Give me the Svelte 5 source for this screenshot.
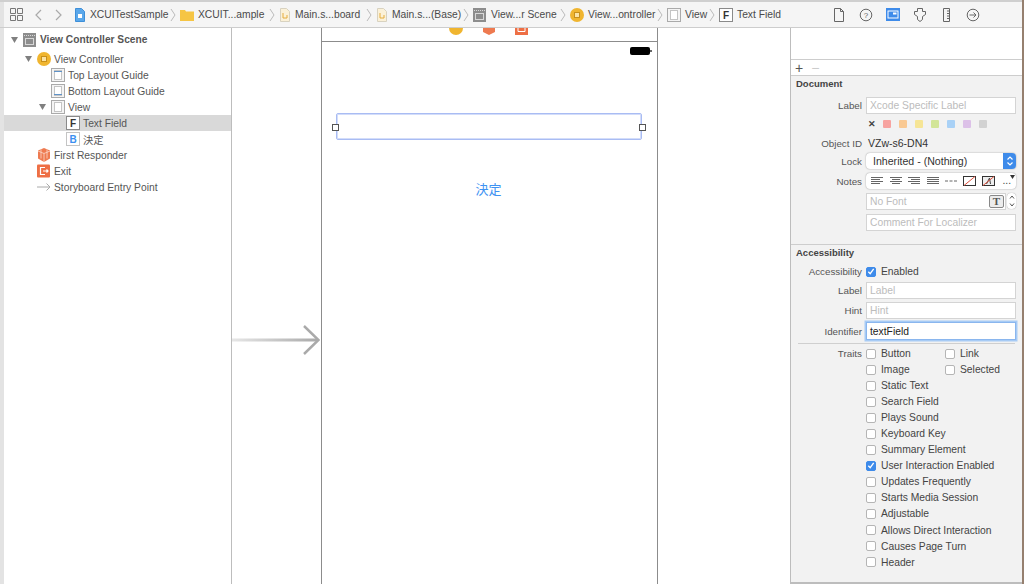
<script lang="ts">
  const crumbs = [
    { icon: "file", text: "XCUITestSample", w: 106 },
    { icon: "folder", text: "XCUIT...ample", w: 99 },
    { icon: "story", text: "Main.s...board", w: 97 },
    { icon: "story", text: "Main.s...(Base)", w: 97 },
    { icon: "scene", text: "View...r Scene", w: 97 },
    { icon: "vc", text: "View...ontroller", w: 97 },
    { icon: "view", text: "View", w: 52 },
    { icon: "F", text: "Text Field", w: 70 }
  ];

  const tree = [
    { depth: 0, arrow: true, icon: "scene", text: "View Controller Scene", bold: true },
    { depth: 1, arrow: true, icon: "vc", text: "View Controller" },
    { depth: 2, icon: "top", text: "Top Layout Guide" },
    { depth: 2, icon: "bottom", text: "Bottom Layout Guide" },
    { depth: 2, arrow: true, icon: "view", text: "View" },
    { depth: 3, icon: "F", text: "Text Field", selected: true },
    { depth: 3, icon: "B", text: "決定" },
    { depth: 1, icon: "cube", text: "First Responder" },
    { depth: 1, icon: "exit", text: "Exit" },
    { depth: 1, icon: "entry", text: "Storyboard Entry Point" }
  ];

  const swatches = ["#f7a3a0", "#f9c993", "#f6e596", "#d2e598", "#a9d1f6", "#dcc1e8", "#d2d2d2"];

  const alignments = [
    "M1 1.5h12M1 3.5h9M1 5.5h12M1 7.5h9",
    "M1 1.5h12M3 3.5h8M1 5.5h12M3 7.5h8",
    "M1 1.5h12M4 3.5h9M1 5.5h12M4 7.5h9",
    "M1 1.5h12M1 3.5h12M1 5.5h12M1 7.5h12",
    "M1 5h3M5.5 5h3M10 5h3"
  ];

  const traits = [
    ["Button", "Link"],
    ["Image", "Selected"],
    ["Static Text"],
    ["Search Field"],
    ["Plays Sound"],
    ["Keyboard Key"],
    ["Summary Element"],
    ["User Interaction Enabled"],
    ["Updates Frequently"],
    ["Starts Media Session"],
    ["Adjustable"],
    ["Allows Direct Interaction"],
    ["Causes Page Turn"],
    ["Header"]
  ];
</script>

{#snippet icon(kind: string)}
  <svg class="ico" width={kind === "file" || kind === "story" ? 12 : 14} height="14" viewBox="0 0 {kind === 'file' || kind === 'story' ? 12 : 14} 14">
    {#if kind === "file"}
      <path d="M1.500.5h6l3 3v10h-9z" fill="#5aa7ea" stroke="#3d8fd9" />
      <rect x="4" y="6" width="4" height="4" fill="#fff" />
    {:else if kind === "folder"}
      <path d="M0 2h5l1 1.500h8V13H0z" fill="#f6c544" />
    {:else if kind === "story"}
      <path d="M1.500.5h6l3 3v10h-9z" fill="#fbf1d8" stroke="#d8d2c0" />
      <path d="M4 5v5h4V7" fill="none" stroke="#e5ac3c" />
    {:else if kind === "scene"}
      <rect x="0" y="0" width="13" height="14" fill="#8d8d8d" />
      <rect x="2.500" y="5.500" width="8" height="6" fill="none" stroke="#d8d8d8" />
      <path d="M1 2.500h11" stroke="#d8d8d8" stroke-dasharray="1 1" />
    {:else if kind === "vc"}
      <circle cx="7" cy="7" r="7" fill="#f0b52f" />
      <rect x="4.500" y="4.500" width="5" height="5" fill="#fbe3a4" stroke="#c8901a" />
    {:else if kind === "top" || kind === "bottom" || kind === "view"}
      <rect x=".5" y=".5" width="13" height="13" fill="#f4f4f4" stroke="#aaa" />
      <rect x="3.500" y="2.500" width="7" height="9" fill="#fff" stroke="#c4c4c4" />
      {#if kind === "top"}<path d="M3 3.500h8" stroke="#5f93c9" />{/if}
      {#if kind === "bottom"}<path d="M3 10.500h8" stroke="#5f93c9" />{/if}
    {:else if kind === "F" || kind === "B"}
      <rect x=".5" y=".5" width="13" height="13" fill="#fff" stroke={kind === "F" ? "#8a8a8a" : "#c4c4c4"} />
      <text x="7" y="10.500" text-anchor="middle" font-size="10" font-weight="700" font-family="Liberation Sans, sans-serif" fill={kind === "F" ? "#333" : "#3b8ff0"}>{kind}</text>
    {:else if kind === "cube"}
      <path d="M7 0l6 2.500v8L7 14l-6-3.500v-8z" fill="#ee7a50" />
      <path d="M1 3l6 2.500L13 3M7 5.500V14M4 1.500v9M10 1.500v9" fill="none" stroke="#fbd9cc" stroke-width=".8" />
    {:else if kind === "exit"}
      <rect width="13" height="13" y=".5" rx="1" fill="#ee6f45" />
      <path d="M8 3.500H3.500v7H8M6 7h5M9.500 5.500L11 7 9.500 8.500" fill="none" stroke="#fff" stroke-width="1.200" />
    {:else if kind === "entry"}
      <path d="M0 7h13M9.500 3.500L13 7l-3.500 3.500" fill="none" stroke="#aaa" />
    {/if}
  </svg>
{/snippet}

{#snippet checkbox(on: boolean)}
  <span class="check" class:on>
    {#if on}
      <svg width="9" height="9" viewBox="0 0 9 9"><path d="M1.500 4.800L3.600 7 7.500 1.500" fill="none" stroke="#fff" stroke-width="1.500" /></svg>
    {/if}
  </span>
{/snippet}

<div class="window">
  <header class="toolbar">
    <div class="jump">
      <svg class="grid" width="13" height="13" viewBox="0 0 13 13">
        <path d="M.5.500h5v5h-5zM7.500.500h5v5h-5zM.5 7.500h5v5h-5zM7.500 7.500h5v5h-5z" fill="none" stroke="#777" />
      </svg>
      <svg class="nav" width="9" height="12" viewBox="0 0 9 12"><path d="M7 1L2 6l5 5" fill="none" stroke="#aaa" stroke-width="1.200" /></svg>
      <svg class="nav" width="9" height="12" viewBox="0 0 9 12"><path d="M2 1l5 5-5 5" fill="none" stroke="#aaa" stroke-width="1.200" /></svg>
      <div class="crumbs">
        {#each crumbs as c, i}
          <div class="crumb" style:width="{c.w}px">
            {@render icon(c.icon)}
            <span>{c.text}</span>
            {#if i < crumbs.length - 1}
              <svg class="sep" width="6" height="14" viewBox="0 0 6 14"><path d="M1 1l4 6-4 6" fill="none" stroke="#bbb" /></svg>
            {/if}
          </div>
        {/each}
      </div>
    </div>
    <div class="tabs">
      <span><svg width="12" height="14" viewBox="0 0 12 14"><path d="M1.500.5h6l3 3v10h-9zM7.500.5v3h3" fill="none" stroke="#666" /></svg></span>
      <span><svg width="14" height="14" viewBox="0 0 14 14"><circle cx="7" cy="7" r="5.800" fill="none" stroke="#666" /><text x="7" y="10" text-anchor="middle" font-size="8" font-family="Liberation Sans, sans-serif" fill="#666">?</text></svg></span>
      <span><svg width="14" height="13" viewBox="0 0 14 13"><rect width="14" height="13" fill="#3e8bea" /><rect x="2" y="3" width="10" height="7" fill="none" stroke="#fff" /><rect x="7" y="4.500" width="3.500" height="2" fill="#fff" /></svg></span>
      <span><svg width="12" height="14" viewBox="0 0 12 14"><path d="M3.500.5h5v3h3v3l-3 2v3l-2.500 2-2.500-2v-3l-3-2v-3h3z" fill="none" stroke="#666" /></svg></span>
      <span><svg width="7" height="14" viewBox="0 0 7 14"><path d="M.5.500h6v13h-6zM4 3h2.500M4 5.500h2.500M4 8h2.500M4 10.500h2.500" fill="none" stroke="#666" /></svg></span>
      <span><svg width="14" height="14" viewBox="0 0 14 14"><circle cx="7" cy="7" r="5.800" fill="none" stroke="#666" /><path d="M3.500 7h6.500M7.500 4.500L10 7 7.500 9.500" fill="none" stroke="#666" /></svg></span>
    </div>
  </header>

  <div class="body">
    <nav class="outline">
      {#each tree as row}
        <div class="row d{row.depth}" class:selected={row.selected}>
          <span class="arrow">{#if row.arrow}<svg width="7" height="6" viewBox="0 0 7 6"><path d="M0 0h7L3.500 6z" fill="#808080" /></svg>{/if}</span>
          {@render icon(row.icon)}
          <span class:bold={row.bold}>{row.text}</span>
        </div>
      {/each}
    </nav>

    <main class="canvas">
      <div class="entry">
        <svg width="88" height="32" viewBox="0 0 88 32">
          <defs>
            <linearGradient id="fade"><stop offset="0" stop-color="#e6e6e6" /><stop offset="1" stop-color="#aaa" /></linearGradient>
          </defs>
          <rect x="0" y="14.500" width="85" height="3" fill="url(#fade)" />
          <path d="M72 2l14.500 14L72 30" fill="none" stroke="#aaa" stroke-width="2.500" />
        </svg>
      </div>
      <div class="scene">
        <div class="dock">
          <svg width="14" height="7" viewBox="0 0 14 7"><path d="M0 0h14a7 7 0 0 1-14 0" fill="#f0b52f" /></svg>
          <svg width="14" height="7" viewBox="0 0 14 7"><path d="M1 0h12v4L7 7 1 4z" fill="#ee7a50" /></svg>
          <svg width="13" height="7" viewBox="0 0 13 7"><path d="M0 0h13v7H0z" fill="#ee6f45" /><path d="M3 0v3.500h7V0" fill="none" stroke="#fff" /></svg>
        </div>
        <div class="screen">
          <div class="status"><span class="battery"></span></div>
          <div class="field">
            <span class="handle left"></span>
            <span class="handle right"></span>
          </div>
          <div class="decide">決定</div>
        </div>
      </div>
    </main>

    <aside class="inspector">
      <div class="blank"></div>
      <div class="addbar"><span class="plus">+</span><span class="minus">−</span></div>

      <section class="doc">
        <h4>Document</h4>
        <div class="line"><span class="lab">Label</span><div class="input ph">Xcode Specific Label</div></div>
        <div class="swatches">
          <span class="x">✕</span>
          {#each swatches as s}<span class="swatch" style:background={s}></span>{/each}
        </div>
        <div class="line"><span class="lab">Object ID</span><div class="value">VZw-s6-DN4</div></div>
        <div class="line"><span class="lab">Lock</span>
          <div class="select">Inherited - (Nothing)
            <span class="stepper"><svg width="8" height="12" viewBox="0 0 8 12"><path d="M1.500 4.500L4 2l2.500 2.500M1.500 7.500L4 10l2.500-2.500" fill="none" stroke="#fff" stroke-width="1.200" /></svg></span>
          </div>
        </div>
        <div class="line"><span class="lab">Notes</span>
          <div class="notes">
            {#each alignments as d}
              <span class="seg"><svg width="14" height="10" viewBox="0 0 14 10"><path {d} fill="none" stroke="#666" /></svg></span>
            {/each}
            <span class="seg"><svg width="13" height="10" viewBox="0 0 13 10"><rect x=".5" y=".5" width="12" height="9" fill="none" stroke="#333" /><path d="M1 9.500L12 .5" stroke="#e0503c" /></svg></span>
            <span class="seg"><svg width="13" height="10" viewBox="0 0 13 10"><rect x=".5" y=".5" width="12" height="9" fill="#eee" stroke="#333" /><path d="M4.500 8l3-6 1 6" fill="none" stroke="#444" /><path d="M1 9.500L12 .5" stroke="#e0503c" /></svg></span>
            <span class="seg more">...<svg class="caret" width="5" height="4" viewBox="0 0 5 4"><path d="M0 0h5L2.500 4z" fill="#333" /></svg></span>
          </div>
        </div>
        <div class="line">
          <span class="lab"></span>
          <div class="input ph font">No Font
            <span class="t">T</span>
          </div>
          <span class="mini"><svg width="6" height="14" viewBox="0 0 6 14"><path d="M1 4.500L3 2l2 2.500M1 9.500L3 12l2-2.500" fill="none" stroke="#555" /></svg></span>
        </div>
        <div class="line"><span class="lab"></span><div class="input ph">Comment For Localizer</div></div>
      </section>

      <section class="a11y">
        <h4>Accessibility</h4>
        <div class="line"><span class="lab">Accessibility</span><div class="checkrow">{@render checkbox(true)}<span>Enabled</span></div></div>
        <div class="line"><span class="lab">Label</span><div class="input ph">Label</div></div>
        <div class="line"><span class="lab">Hint</span><div class="input ph">Hint</div></div>
        <div class="line"><span class="lab">Identifier</span><div class="input focused">textField</div></div>
      </section>
      <hr />
      <div class="traits">
        {#each traits as pair, i}
          <div class="line trait">
            <span class="lab">{i === 0 ? "Traits" : ""}</span>
            <div class="checkrow first">{@render checkbox(pair[0] === "User Interaction Enabled")}<span>{pair[0]}</span></div>
            {#if pair[1]}
              <div class="checkrow">{@render checkbox(false)}<span>{pair[1]}</span></div>
            {/if}
          </div>
        {/each}
      </div>
    </aside>
  </div>
</div>

<style>
  :global(body) {
    margin: 0;
    background: #fff;
  }

  .window {
    width: 1024px;
    height: 584px;
    box-sizing: border-box;
    overflow: hidden;
    display: flex;
    flex-direction: column;
    border-right: 2px solid #96806f;
    font-family: "Liberation Sans", "Noto Sans CJK JP", sans-serif;
    font-size: 10.3px;
    color: #4a4a4a;
  }

  .toolbar {
    height: 28px;
    box-sizing: border-box;
    flex: none;
    display: flex;
    background: #f5f5f5;
    border-top: 2px solid #cfcfcf;
    border-bottom: 1px solid #cdcdcd;
  }

  .jump {
    width: 790px;
    flex: none;
    display: flex;
    align-items: center;
    box-sizing: border-box;
    padding-left: 6px;
    border-left: 4px solid #e3e3e3;
  }

  .grid {
    margin-right: 11px;
  }

  .nav {
    margin-right: 11px;
  }

  .crumbs {
    display: flex;
  }

  .crumb {
    display: flex;
    align-items: center;
    gap: 4px;
    flex: none;
    white-space: nowrap;
    position: relative;
  }

  .sep {
    position: absolute;
    right: 4px;
  }

  .tabs {
    flex: 1;
    display: flex;
    align-items: center;
    padding-left: 36px;
  }

  .tabs span {
    width: 26.8px;
    display: flex;
    justify-content: center;
  }

  .body {
    flex: 1;
    display: flex;
    min-height: 0;
  }

  .outline {
    width: 232px;
    flex: none;
    box-sizing: border-box;
    padding-top: 3px;
    border-left: 4px solid #e3e3e3;
    border-right: 1px solid #bdbdbd;
    background: #fff;
  }

  .row {
    height: 16px;
    display: flex;
    align-items: center;
    gap: 3px;
    white-space: nowrap;
    color: #555;
  }

  .row.selected {
    background: #d9d9d9;
  }

  .row .ico {
    flex: none;
  }

  .d0 { padding-left: 6px; height: 17px; margin-bottom: 3px; }
  .d1 { padding-left: 20px; }
  .d2 { padding-left: 34px; }
  .d3 { padding-left: 49px; }

  .arrow {
    width: 9px;
    flex: none;
    display: flex;
    padding-left: 1px;
  }

  .bold {
    font-weight: 700;
    font-size: 10.2px;
  }

  .canvas {
    width: 558px;
    flex: none;
    display: flex;
    background: #fff;
  }

  .entry {
    width: 89px;
    flex: none;
    align-self: flex-start;
    margin-top: 296px;
  }

  .scene {
    width: 337px;
    flex: none;
    display: flex;
    flex-direction: column;
    box-sizing: border-box;
    border-left: 1px solid #8c8c8c;
    border-right: 1px solid #8c8c8c;
  }

  .dock {
    height: 13px;
    flex: none;
    display: flex;
    gap: 19px;
    justify-content: center;
    align-items: flex-start;
    border-bottom: 1px solid #8c8c8c;
    padding-right: 2px;
  }

  .screen {
    flex: 1;
    display: flex;
    flex-direction: column;
  }

  .status {
    height: 13px;
    flex: none;
    display: flex;
    justify-content: flex-end;
    align-items: flex-end;
    padding-right: 7px;
  }

  .battery {
    width: 20px;
    height: 8px;
    background: #000;
    border-radius: 2px;
    position: relative;
  }

  .battery::after {
    content: "";
    position: absolute;
    right: -2px;
    top: 3px;
    width: 2px;
    height: 2px;
    background: #666;
  }

  .field {
    height: 27px;
    box-sizing: border-box;
    flex: none;
    margin: 58px 15px 0 14px;
    border: 1px solid #a9bcf3;
    box-shadow: inset 0 0 0 1px #d3ddfa;
    border-radius: 2px;
    position: relative;
  }

  .handle {
    position: absolute;
    top: 10px;
    width: 7px;
    height: 7px;
    box-sizing: border-box;
    background: #fff;
    border: 1px solid #555;
  }

  .handle.left { left: -5px; }
  .handle.right { right: -5px; }

  .decide {
    margin-top: 39px;
    text-align: center;
    font-size: 13px;
    color: #3f93f2;
    padding-right: 2px;
  }

  .inspector {
    flex: 1;
    min-width: 0;
    display: flex;
    flex-direction: column;
    box-sizing: border-box;
    background: #f2f2f2;
    border-left: 1px solid #bdbdbd;
    border-bottom: 2px solid #bdbdbd;
  }

  .blank {
    height: 32px;
    box-sizing: border-box;
    flex: none;
    background: #fff;
    border-bottom: 1px solid #cdcdcd;
  }

  .addbar {
    height: 16px;
    box-sizing: border-box;
    flex: none;
    display: flex;
    align-items: center;
    gap: 8px;
    padding-left: 4px;
    background: #fff;
    border-bottom: 1px solid #cdcdcd;
    font-size: 14px;
    color: #555;
  }

  .minus {
    color: #ccc;
  }

  section {
    padding: 0 5px;
    display: grid;
    flex: none;
  }

  .doc {
    height: 169px;
    box-sizing: border-box;
    grid-template-rows: 19px 20px 18px 20px 16px 24px 16px 26px;
    border-bottom: 1px solid #cdcdcd;
  }

  .a11y {
    grid-template-rows: 16px 21px 16px 24px 18px;
  }

  h4 {
    margin: 0;
    height: 16px;
    font-size: 9.5px;
    font-weight: 700;
    color: #444;
    line-height: 16px;
  }

  .line {
    display: flex;
    align-items: center;
  }

  .lab {
    width: 66px;
    flex: none;
    margin-right: 4px;
    text-align: right;
    font-size: 9.8px;
    color: #555;
    white-space: nowrap;
  }

  .input {
    width: 150px;
    height: 17px;
    box-sizing: border-box;
    flex: none;
    display: flex;
    align-items: center;
    padding-left: 3px;
    background: #fff;
    border: 1px solid #d4d4d4;
    position: relative;
  }

  .ph {
    color: #bcbcbc;
  }

  .font {
    width: 140px;
  }

  .t {
    position: absolute;
    right: 1px;
    top: 1px;
    width: 15px;
    height: 13px;
    box-sizing: border-box;
    border: 1px solid #888;
    border-radius: 2px;
    background: #ececec;
    text-align: center;
    line-height: 11px;
    font-size: 11px;
    color: #555;
    font-family: "Liberation Serif", serif;
    font-weight: 700;
  }

  .mini {
    margin-left: 1px;
    width: 9px;
    height: 16px;
    display: flex;
    justify-content: center;
    align-items: center;
    background: #fff;
    border-radius: 4px;
    box-shadow: 0 0 1px #888;
  }

  .swatches {
    display: flex;
    align-items: center;
    gap: 8px;
    padding-left: 72px;
  }

  .x {
    font-size: 9px;
    color: #444;
    font-weight: 700;
    width: 7px;
  }

  .swatch {
    width: 8px;
    height: 8px;
    border-radius: 1px;
  }

  .value {
    color: #333;
    font-size: 10.5px;
    padding-left: 2px;
  }

  .select {
    width: 150px;
    height: 16px;
    box-sizing: border-box;
    padding-left: 7px;
    display: flex;
    align-items: center;
    background: #fff;
    border-radius: 4px;
    box-shadow: 0 0 1.5px #888;
    position: relative;
    overflow: hidden;
    font-size: 10.6px;
    color: #333;
  }

  .stepper {
    position: absolute;
    right: 0;
    top: 0;
    bottom: 0;
    width: 13px;
    display: flex;
    align-items: center;
    justify-content: center;
    background: #3e8bea;
  }

  .notes {
    width: 150px;
    height: 16px;
    box-sizing: border-box;
    display: flex;
    align-items: center;
    padding-left: 2px;
    background: #fff;
    border-radius: 4px;
    box-shadow: 0 0 1.5px #888;
  }

  .seg {
    width: 18.5px;
    flex: none;
    display: flex;
    justify-content: center;
  }

  .more {
    color: #444;
    position: relative;
    line-height: 10px;
  }

  .caret {
    position: absolute;
    right: 1px;
    top: -1px;
  }

  .checkrow {
    display: flex;
    align-items: center;
    gap: 5px;
    color: #444;
  }

  .check {
    width: 10px;
    height: 10px;
    box-sizing: border-box;
    flex: none;
    display: flex;
    align-items: center;
    justify-content: center;
    background: #fff;
    border: 1px solid #b5b5b5;
    border-radius: 2px;
  }

  .check.on {
    background: #3e8bea;
    border-color: #3e8bea;
  }

  .focused {
    height: 18px;
    color: #222;
    border-color: #8ab6ee;
    box-shadow: 0 0 0 1.5px #a7cbf5;
  }

  hr {
    margin: 3px 0 0 7px;
    border: 0;
    border-top: 1px solid #cfcfcf;
    width: 217px;
    flex: none;
  }

  .traits {
    margin-top: 1.5px;
    padding-left: 5px;
  }

  .trait {
    height: 16.05px;
  }

  .first {
    width: 79px;
    flex: none;
    white-space: nowrap;
  }
</style>
